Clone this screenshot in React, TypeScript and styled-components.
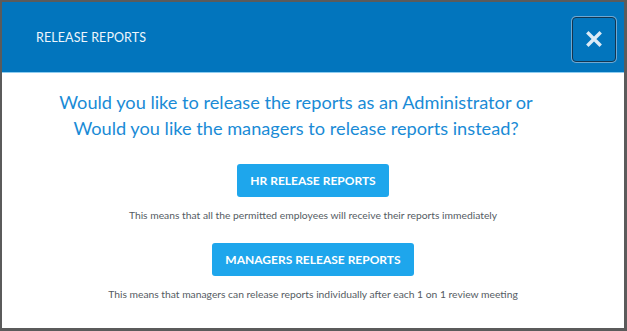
import styled, {createGlobalStyle} from "styled-components";

const GlobalStyle = createGlobalStyle`
    html, body {
        margin: 0;
        padding: 0;
        background: #fff;
    }
    * {
        box-sizing: border-box;
    }
`

export default function App() {
    return <Frame>
        <GlobalStyle/>
        <Header>
            <Title>RELEASE REPORTS</Title>
            <CloseButton aria-label="close">
                <svg width="16" height="16" viewBox="0 0 16 16">
                    <path d="M2.5 2.5 L13.5 13.5 M13.5 2.5 L2.5 13.5" stroke="#dcebf6" strokeWidth="3.4" strokeLinecap="square"/>
                </svg>
            </CloseButton>
        </Header>
        <Body>
            <Question>
                Would you like to release the reports as an Administrator or<br/>
                Would you like the managers to release reports instead?
            </Question>
            <Option>
                <ActionButton>HR RELEASE REPORTS</ActionButton>
                <Hint>This means that all the permitted employees will receive their reports immediately</Hint>
            </Option>
            <Option>
                <ActionButton>MANAGERS RELEASE REPORTS</ActionButton>
                <Hint>This means that managers can release reports individually after each 1 on 1 review meeting</Hint>
            </Option>
        </Body>
    </Frame>
}

const Frame = styled.div`
    width: 627px;
    height: 331px;
    border: 2px solid #5b5b5b;
    border-right-width: 3px;
    border-bottom-width: 3px;
    display: flex;
    flex-direction: column;
    background: #fff;
    font-family: "Lato", "Open Sans", sans-serif;
`

const Header = styled.div`
    height: 71px;
    flex: 0 0 71px;
    background: #0275bd;
    border-bottom: 1px solid #8fcdf0;
    display: flex;
    align-items: center;
    justify-content: space-between;
    padding: 0 8px 0 34px;
`

const Title = styled.h1`
    margin: 0;
    font-size: 12.5px;
    font-weight: 400;
    color: #eef6fc;
    letter-spacing: 0.1px;
`

const CloseButton = styled.button`
    width: 44px;
    height: 45px;
    margin-top: 4px;
    border: 1.5px solid #143550;
    border-radius: 4px;
    box-shadow: 0 0 0 1px #6fa9d3;
    background: #0275bd;
    display: flex;
    align-items: center;
    justify-content: center;
    padding: 0;
`

const Body = styled.div`
    flex: 1;
    display: flex;
    flex-direction: column;
    align-items: center;
    padding-top: 16px;
`

const Question = styled.p`
    margin: 0 34px 23px 0;
    font-size: 18.2px;
    line-height: 26px;
    color: #1a8bd6;
    text-align: center;
`

const Option = styled.div`
    display: flex;
    flex-direction: column;
    align-items: center;
    margin-bottom: 22px;
`

const ActionButton = styled.button`
    height: 33px;
    padding: 0 13px;
    border: none;
    border-radius: 3px;
    background: #1ea6ec;
    color: #fff;
    font-family: "Lato", "Open Sans", sans-serif;
    font-size: 12px;
    font-weight: 700;
`

const Hint = styled.p`
    margin: 12px 0 0;
    font-size: 10.3px;
    line-height: 12px;
    color: #555c63;
`
